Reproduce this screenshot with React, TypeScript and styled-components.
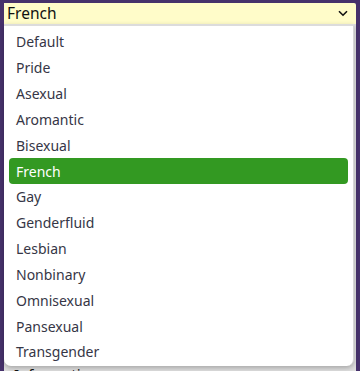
import React from 'react';
import styled, { createGlobalStyle } from 'styled-components';

const GlobalStyle = createGlobalStyle`
    html, body {
        margin: 0;
        padding: 0;
        background: #46316b;
    }
    body {
        font-family: 'Noto Sans', 'Open Sans', sans-serif;
        width: 360px;
        height: 371px;
        overflow: hidden;
    }
`;

const options = [
    'Default',
    'Pride',
    'Asexual',
    'Aromantic',
    'Bisexual',
    'French',
    'Gay',
    'Genderfluid',
    'Lesbian',
    'Nonbinary',
    'Omnisexual',
    'Pansexual',
    'Transgender',
];

const App = () => {
    const [selected, setSelected] = React.useState<string>('French');

    return (
        <>
            <GlobalStyle />
            <Page>
                <SelectWrap>
                    <SelectBar>
                        <span>{selected}</span>
                        <svg width="10" height="7" viewBox="0 0 10 7">
                            <path d="M1 1.2 L5 5.2 L9 1.2" fill="none" stroke="#111" strokeWidth="1.6" />
                        </svg>
                    </SelectBar>
                    <Menu>
                        {options.map((item) => (
                            <Option key={item} active={item === selected} onClick={() => setSelected(item)}>
                                {item}
                            </Option>
                        ))}
                    </Menu>
                </SelectWrap>
                <Behind>
                    {[0, 1, 2, 3, 4, 5, 6].map((i) => (
                        <Field key={i} />
                    ))}
                    <HiddenLabel>Information</HiddenLabel>
                </Behind>
            </Page>
        </>
    );
};

const Page = styled.div`
    padding: 3px 4px 0 4px;
    display: flex;
    flex-direction: column;
`;

const SelectWrap = styled.div`
    position: relative;
    z-index: 2;
`;

const SelectBar = styled.div`
    height: 21px;
    background: #fffcc9;
    border-radius: 0 2px 0 0;
    display: flex;
    align-items: center;
    justify-content: space-between;
    padding: 0 8px 0 3px;
    font-size: 15.5px;
    color: #111;
    box-sizing: border-box;
    width: 352px;

    span {
        line-height: 21px;
    }
`;

const Menu = styled.div`
    position: absolute;
    top: 21px;
    left: 0;
    width: 350px;
    background: #fff;
    border-top: 2px solid #dcdcdc;
    border-right: 1px solid #d6d6d6;
    border-radius: 0 0 7px 7px;
    box-shadow: 0 2px 5px rgba(0, 0, 0, 0.25);
    padding: 3px 5px 1px 5px;
    box-sizing: border-box;
    display: flex;
    flex-direction: column;
`;

const Option = styled.div<{ active: boolean }>`
    height: 25.83px;
    display: flex;
    align-items: center;
    padding-left: 7px;
    font-size: 14px;
    color: ${(p) => (p.active ? '#ffffff' : '#363646')};
    background: ${(p) => (p.active ? '#339922' : 'transparent')};
    border-radius: 4px;
    cursor: pointer;
`;

const Behind = styled.div`
    background: #dedede;
    display: flex;
    flex-direction: column;
    gap: 19px;
    padding: 40px 3px 0 4px;
    width: 352px;
    box-sizing: border-box;
    height: 347px;
    overflow: hidden;
`;

const Field = styled.div`
    height: 24px;
    flex-shrink: 0;
    background: #cfcfcf;
    border-radius: 3px;
`;

const HiddenLabel = styled.div`
    font-size: 15px;
    line-height: 18px;
    flex-shrink: 0;
    color: #111;
    padding-left: 6px;
`;

export default App;
